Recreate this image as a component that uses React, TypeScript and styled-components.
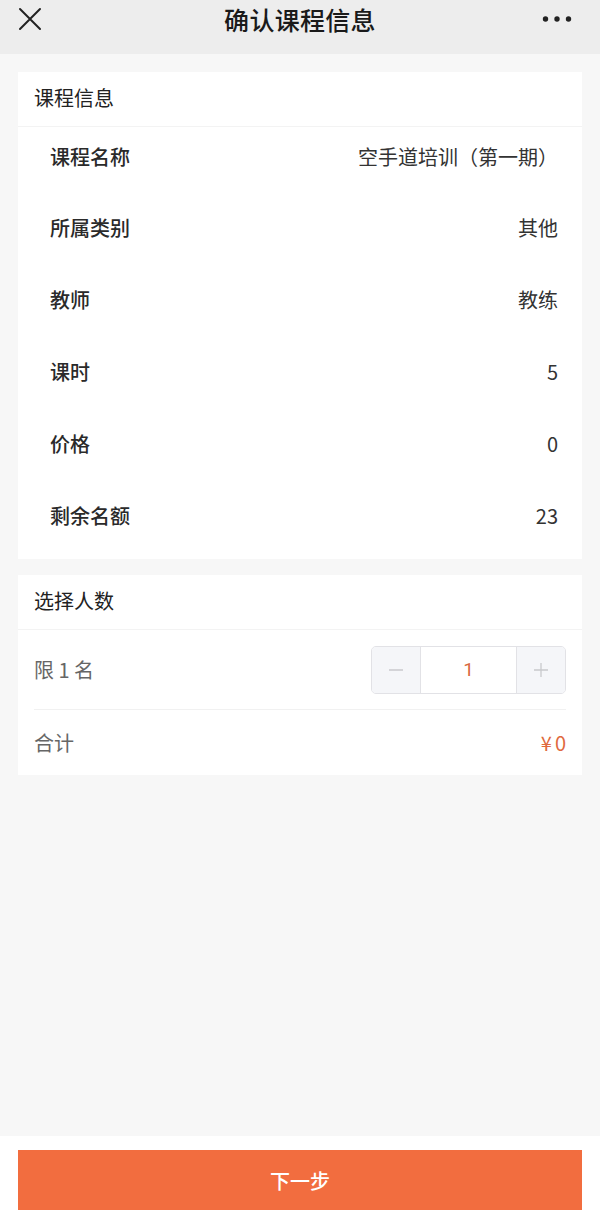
import React from "react";
import styled, { createGlobalStyle } from "styled-components";

const Global = createGlobalStyle`
  html, body { margin: 0; padding: 0; background: #f7f7f7; }
  body { font-family: "Noto Sans CJK SC", "Noto Sans", sans-serif; }
  * { box-sizing: border-box; }
`;

const Page = styled.div`
  width: 600px;
  height: 1224px;
  display: flex;
  flex-direction: column;
  background: #f7f7f7;
`;

const TopBar = styled.div`
  height: 54px;
  flex: none;
  background: #ededed;
  display: grid;
  grid-template-columns: 60px 1fr 60px;
  align-items: center;
  padding-bottom: 16px;
`;

const Title = styled.div`
  text-align: center;
  font-size: 25px;
  font-weight: 500;
  color: #1a1a1a;
  letter-spacing: 0.3px;
`;

const IconSlot = styled.div<{ $right?: boolean }>`
  display: flex;
  justify-content: ${(p) => (p.$right ? "flex-end" : "flex-start")};
  padding: ${(p) => (p.$right ? "0 28px 0 0" : "0 0 0 18px")};
`;

const Content = styled.div`
  flex: 1;
  padding: 18px 18px 0;
  display: flex;
  flex-direction: column;
  gap: 16px;
`;

const Card = styled.div`
  background: #fff;
`;

const CardHead = styled.div`
  height: 55px;
  padding: 0 0 3px 16px;
  display: flex;
  align-items: center;
  font-size: 20px;
  color: #222;
  border-bottom: 1px solid #f3f3f3;
`;

const InfoList = styled.div`
  padding: 0 24px 8px 32px;
`;

const InfoRow = styled.div`
  height: 72px;
  display: flex;
  align-items: center;
  justify-content: space-between;
  font-size: 20px;
  &:first-child { height: 64px; align-items: flex-start; padding-top: 15px; }
`;

const InfoLabel = styled.span`
  font-weight: 500;
  color: #2a2a2a;
`;

const InfoValue = styled.span`
  color: #333;
`;

const SelectRow = styled.div<{ $h: number }>`
  height: ${(p) => p.$h}px;
  margin: 0 16px;
  display: flex;
  align-items: center;
  justify-content: space-between;
  font-size: 20px;
  color: #666;
  & + & { border-top: 1px solid #f1f1f1; }
`;

const Price = styled.span`
  color: #e0693d;
  letter-spacing: 3px;
  margin-right: -3px;
`;

const Stepper = styled.div`
  display: flex;
  height: 48px;
  border: 1px solid #e2e2e6;
  border-radius: 5px;
  overflow: hidden;
`;

const StepBtn = styled.div`
  width: 48px;
  background: #f5f6f9;
  display: flex;
  align-items: center;
  justify-content: center;
`;

const StepValue = styled.div`
  width: 97px;
  border-left: 1px solid #e2e2e6;
  border-right: 1px solid #e2e2e6;
  background: #fff;
  display: flex;
  align-items: center;
  justify-content: center;
  color: #d9693f;
  font-size: 19px;
  font-family: "Roboto", sans-serif;
  font-weight: 400;
`;

const Footer = styled.div`
  flex: none;
  height: 88px;
  background: #fff;
  padding: 14px 18px;
`;

const NextButton = styled.button`
  width: 100%;
  height: 60px;
  border: none;
  background: #f26d3f;
  color: #fff;
  font-family: inherit;
  font-size: 20px;
  font-weight: 500;
`;

const info: [string, string][] = [
  ["课程名称", "空手道培训（第一期）"],
  ["所属类别", "其他"],
  ["教师", "教练"],
  ["课时", "5"],
  ["价格", "0"],
  ["剩余名额", "23"],
];

export default function App() {
  return (
    <Page>
      <Global />
      <TopBar>
        <IconSlot>
          <svg width="24" height="24" viewBox="0 0 24 24" fill="none" stroke="#222" strokeWidth="2" strokeLinecap="round">
            <path d="M2 2 L22 22 M22 2 L2 22" />
          </svg>
        </IconSlot>
        <Title>确认课程信息</Title>
        <IconSlot $right>
          <svg width="30" height="8" viewBox="0 0 30 8" fill="#222">
            <circle cx="3.5" cy="4" r="2.7" />
            <circle cx="15" cy="4" r="2.7" />
            <circle cx="26.5" cy="4" r="2.7" />
          </svg>
        </IconSlot>
      </TopBar>
      <Content>
        <Card>
          <CardHead>课程信息</CardHead>
          <InfoList>
            {info.map(([k, v]) => (
              <InfoRow key={k}>
                <InfoLabel>{k}</InfoLabel>
                <InfoValue>{v}</InfoValue>
              </InfoRow>
            ))}
          </InfoList>
        </Card>
        <Card>
          <CardHead>选择人数</CardHead>
          <SelectRow $h={79}>
            <span>限 1 名</span>
            <Stepper>
              <StepBtn>
                <svg width="16" height="16" viewBox="0 0 16 16" stroke="#c8c9cc" strokeWidth="1.3">
                  <path d="M1 8 H15" />
                </svg>
              </StepBtn>
              <StepValue>1</StepValue>
              <StepBtn>
                <svg width="16" height="16" viewBox="0 0 16 16" stroke="#c8c9cc" strokeWidth="1.3">
                  <path d="M1 8 H15 M8 1 V15" />
                </svg>
              </StepBtn>
            </Stepper>
          </SelectRow>
          <SelectRow $h={66}>
            <span>合计</span>
            <Price>¥0</Price>
          </SelectRow>
        </Card>
      </Content>
      <Footer>
        <NextButton>下一步</NextButton>
      </Footer>
    </Page>
  );
}
